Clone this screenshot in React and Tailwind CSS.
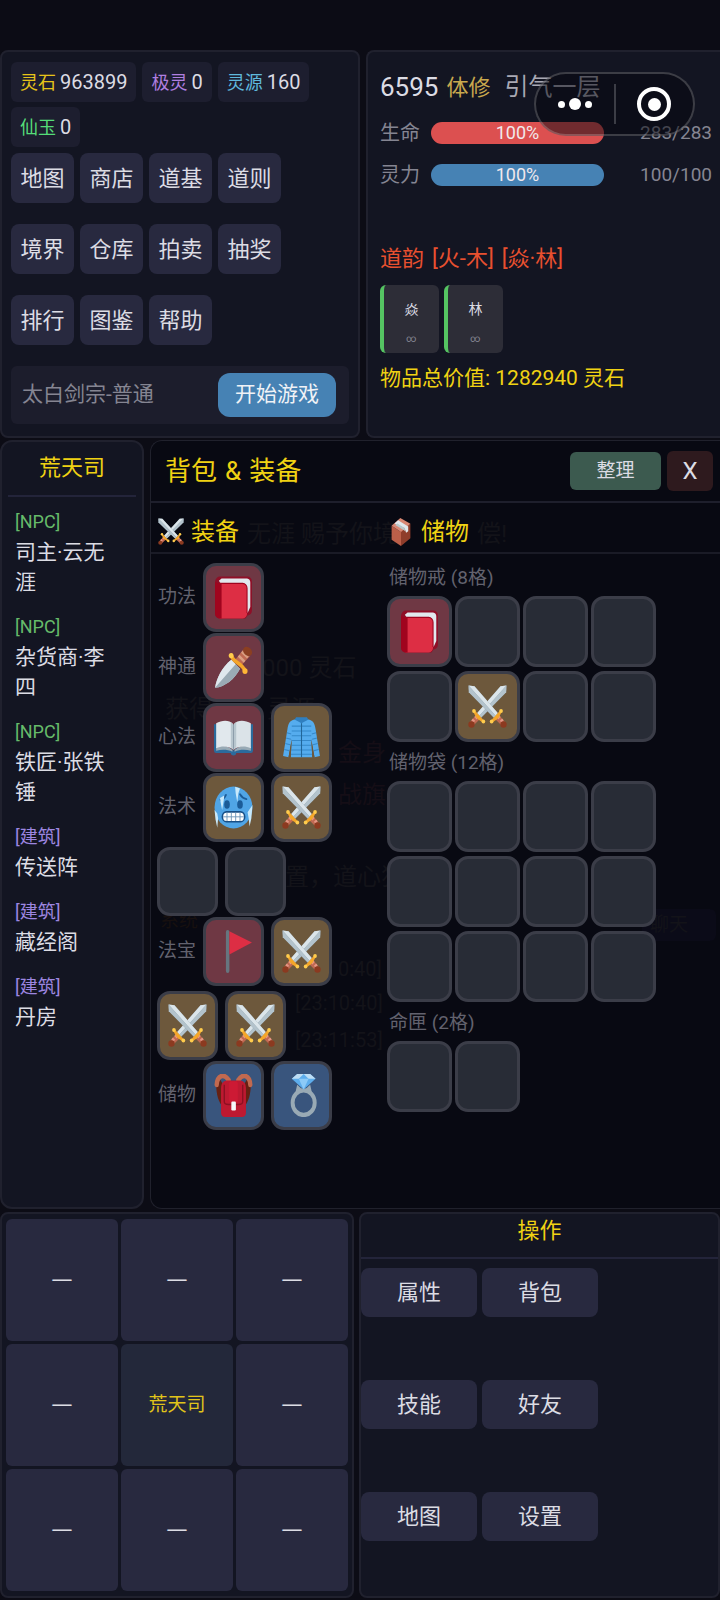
import React, { useState } from 'react'

const CURRENCIES = [
  { label: '灵石', value: 963899, color: 'text-[#e6c419]' },
  { label: '极灵', value: 0, color: 'text-[#b07fe0]' },
  { label: '灵源', value: 160, color: 'text-[#5fb8dc]' },
  { label: '仙玉', value: 0, color: 'text-[#55dc78]' },
]

const MENU = ['地图', '商店', '道基', '道则', '境界', '仓库', '拍卖', '抽奖', '排行', '图鉴', '帮助']

const PLACES = [
  { type: 'NPC', name: '司主·云无涯' },
  { type: 'NPC', name: '杂货商·李四' },
  { type: 'NPC', name: '铁匠·张铁锤' },
  { type: '建筑', name: '传送阵' },
  { type: '建筑', name: '藏经阁' },
  { type: '建筑', name: '丹房' },
]

const EQUIPMENT = [
  { label: '功法', slots: [{ icon: 'book', tone: 'red' }] },
  { label: '神通', slots: [{ icon: 'dagger', tone: 'red' }] },
  { label: '心法', slots: [{ icon: 'openBook', tone: 'red' }, { icon: 'coat', tone: 'gold' }] },
  { label: '法术', slots: [{ icon: 'coldFace', tone: 'gold' }, { icon: 'swords', tone: 'gold' }, {}, {}] },
  {
    label: '法宝',
    slots: [
      { icon: 'flag', tone: 'red' },
      { icon: 'swords', tone: 'gold' },
      { icon: 'swords', tone: 'gold' },
      { icon: 'swords', tone: 'gold' },
    ],
  },
  { label: '储物', slots: [{ icon: 'backpack', tone: 'blue' }, { icon: 'ring', tone: 'blue' }] },
]

const STORAGE = [
  { label: '储物戒', size: 8, items: { 0: { icon: 'book', tone: 'red' }, 5: { icon: 'swords', tone: 'gold' } } },
  { label: '储物袋', size: 12, items: {} },
  { label: '命匣', size: 2, items: {} },
]

const ACTIONS = ['属性', '背包', '技能', '好友', '地图', '设置']

const TONES = {
  empty: 'bg-[#282c36]',
  red: 'bg-[#6f3844]',
  gold: 'bg-[#6d583c]',
  blue: 'bg-[#39557d]',
}

export default function App() {
  const [bagOpen, setBagOpen] = useState(true)

  return (
    <div className="relative flex min-h-screen flex-col bg-[#0c0c15] pt-[50px] font-[Roboto,'Noto_Sans_CJK_SC',sans-serif] text-[#dcdce4]">
      <div className="grid grid-cols-[60fr_59fr] gap-1.5">
        <MenuPanel />
        <StatusPanel />
      </div>
      <div className="mt-0.5 grid flex-1 grid-cols-[144px_1fr] gap-1.5">
        <PlacesPanel />
        <section className="relative overflow-hidden rounded-l-xl border border-r-0 border-[#20212c] bg-[#080912]">
          <MessageLog />
          {bagOpen && <Bag onClose={() => setBagOpen(false)} />}
        </section>
      </div>
      <div className="mt-[3px] mb-0.5 grid grid-cols-[354fr_361fr] gap-[5px]">
        <MiniMap />
        <ActionPanel />
      </div>
      <Capsule />
    </div>
  )
}

function MenuPanel() {
  return (
    <section className="rounded-lg border-2 border-[#20212e] bg-[#131522] px-[9px] pt-2.5 pb-3">
      <div className="flex flex-wrap gap-x-1.5 gap-y-[5px]">
        {CURRENCIES.map((c) => (
          <span key={c.label} className="flex h-10 items-center gap-1 rounded-md bg-[#1d1e2f] px-[9px]">
            <span className={`text-[18px] ${c.color}`}>{c.label}</span>
            <span className="text-[20px]">{c.value}</span>
          </span>
        ))}
      </div>
      <div className="mt-1.5 flex flex-wrap gap-x-1.5 gap-y-[21px] pr-12">
        {MENU.map((name) => (
          <button key={name} className="h-[50px] w-[63px] rounded-lg bg-[#28293f] text-[22px]">{name}</button>
        ))}
      </div>
      <div className="mt-[21px] flex h-[58px] items-center justify-between rounded-md bg-[#1c1d2c] pr-[13px] pl-[11px]">
        <span className="text-[21px] text-[#858592]">太白剑宗-普通</span>
        <button className="h-11 rounded-xl bg-[#4682b4] px-[17px] text-[21px] text-[#f0f2f6]">开始游戏</button>
      </div>
    </section>
  )
}

function StatusPanel() {
  return (
    <section className="rounded-l-lg border-2 border-r-0 border-[#20212e] bg-[#131522] pt-2.5 pr-2 pl-3">
      <div className="flex h-[50px] items-center">
        <span className="text-[26px]">6595</span>
        <span className="ml-2 text-[22px] text-[#c9a94e]">体修</span>
        <span className="ml-3.5 text-[24px] text-[#a9a9b4]">引气一层</span>
      </div>
      <Meter label="生命" value={283} max={283} color="bg-[#dc5050]" />
      <Meter label="灵力" value={100} max={100} color="bg-[#4682b4]" />
      <p className="mt-12 flex gap-2 text-[22px] leading-[30px] text-[#e8502f]">
        <span>道韵</span>
        <span>[火-木]</span>
        <span>[焱·林]</span>
      </p>
      <div className="mt-[11px] flex gap-[5px]">
        <Charm name="焱" />
        <Charm name="林" />
      </div>
      <p className="mt-2.5 text-[21px] leading-[30px] text-[#f0d213]">物品总价值: 1282940 灵石</p>
    </section>
  )
}

function Meter({ label, value, max, color }) {
  return (
    <div className="flex h-[42px] items-center">
      <span className="w-[51px] text-[20px] text-[#858592]">{label}</span>
      <div className="relative h-[22px] w-[173px] overflow-hidden rounded-full bg-[#28293f]">
        <div className={`h-full ${color}`} style={{ width: `${(value / max) * 100}%` }} />
        <span className="absolute inset-0 text-center text-[18px] leading-[22px] text-[#f0e8ec]">{Math.round((value / max) * 100)}%</span>
      </div>
      <span className="ml-auto text-[19px] text-[#858592]">{value}/{max}</span>
    </div>
  )
}

function Charm({ name }) {
  return (
    <div className="flex h-[68px] w-[59px] flex-col items-center rounded-md border-l-4 border-[#55c462] bg-[#2d2d37] pt-2.5">
      <span className="text-[14px] leading-7">{name}</span>
      <span className="mt-1.5 text-[10px] leading-5 text-[#858592]">∞</span>
    </div>
  )
}

function PlacesPanel() {
  return (
    <section className="rounded-xl border-2 border-[#20212e] bg-[#131522] px-1.5">
      <h2 className="border-b-2 border-[#23243a] pt-2.5 pb-[11px] text-center text-[22px] leading-8 text-[#f0d213]">荒天司</h2>
      <ul className="flex flex-col gap-[15px] pt-2.5 pr-3.5 pl-[7px]">
        {PLACES.map((p) => (
          <li key={p.name}>
            <span className={`block text-[18px] leading-[30px] ${p.type === 'NPC' ? 'text-[#66bb6a]' : 'text-[#9d86e0]'}`}>[{p.type}]</span>
            <a href="#" className="block text-[21px] leading-[30px]">{p.name}</a>
          </li>
        ))}
      </ul>
    </section>
  )
}

// Old messages, barely visible behind the bag window
function MessageLog() {
  return (
    <div aria-hidden="true" className="absolute inset-0 text-[24px] leading-8 whitespace-nowrap text-[#131319]">
      <span className="absolute top-[77px] left-[96px]">无涯 赐予你境</span>
      <span className="absolute top-[77px] left-[326px]">偿!</span>
      <span className="absolute top-[211px] left-[111px]">000 灵石</span>
      <span className="absolute top-[252px] left-[14px]">获得</span>
      <span className="absolute top-[252px] left-[116px]">灵源</span>
      <span className="absolute top-[296px] left-[187px] text-[#150e16]">金身</span>
      <span className="absolute top-[338px] left-[187px] text-[#150e16]">战旗 [</span>
      <span className="absolute top-[420px] left-[134px]">置，道心犹</span>
      <span className="absolute top-[468px] left-[9px] text-[19px] leading-6 text-[#17100f]">系统</span>
      <span className="absolute top-[512px] left-[187px] text-[20px]">0:40]</span>
      <span className="absolute top-[546px] left-[144px] text-[20px]">[23:10:40]</span>
      <span className="absolute top-[583px] left-[144px] text-[20px]">[23:11:53]</span>
      <span className="absolute top-[468px] right-1 rounded-md bg-[#0b0b18] pr-7 pl-2 text-[19px]">聊天</span>
    </div>
  )
}

function Bag({ onClose }) {
  return (
    <div className="relative">
      <div className="flex h-[62px] items-center border-b-2 border-[#1e1f2c] pr-[7px] pl-3.5">
        <h1 className="mr-auto flex gap-2 text-[26px] text-[#f0d213]">
          <span>背包</span>
          <span>&</span>
          <span>装备</span>
        </h1>
        <button className="h-[38px] w-[91px] rounded-md bg-[#3c5a4f] text-[19px]">整理</button>
        <button onClick={onClose} aria-label="关闭" className="ml-1.5 h-10 w-[46px] rounded-md bg-[#2e1a1e] text-[24px]">X</button>
      </div>
      <div className="grid h-[51px] grid-cols-[230px_1fr] items-center border-b-2 border-[#1a1b26] pt-2 pl-[7px] text-[24px] text-[#f0d213]">
        <h2 className="flex items-center gap-[7px]"><Glyph name="swords" className="h-[27px] w-[26px]" />装备</h2>
        <h2 className="flex items-center gap-[7px]"><Glyph name="box" className="h-[28px] w-[26px]" />储物</h2>
      </div>
      <div className="grid grid-cols-[230px_1fr] pl-1.5">
        <div className="flex flex-col gap-px pt-[9px]">
          {EQUIPMENT.map((row) => (
            <div key={row.label} className="flex flex-wrap items-center gap-x-[7px] gap-y-[5px] pr-6">
              <span className="pl-px text-[19px] text-[#62626e]">{row.label}</span>
              {row.slots.map((slot, i) => (
                <Slot key={i} {...slot} className="h-[69px] w-[61px]" />
              ))}
            </div>
          ))}
        </div>
        <div className="pt-[3px]">
          {STORAGE.map((bag) => (
            <div key={bag.label}>
              <h3 className="pt-[3px] pl-0.5 text-[19px] leading-9 text-[#62626e]">{bag.label} ({bag.size}格)</h3>
              <div className="grid w-fit grid-cols-4 gap-x-[3px] gap-y-1">
                {Array.from({ length: bag.size }, (_, i) => (
                  <Slot key={i} {...bag.items[i]} className="h-[71px] w-[65px]" />
                ))}
              </div>
            </div>
          ))}
        </div>
      </div>
    </div>
  )
}

function Slot({ icon, tone = 'empty', className }) {
  return (
    <button aria-label={icon || 'empty'} className={`flex items-center justify-center rounded-[13px] border-3 border-[#3b3d48] ${TONES[tone]} ${className}`}>
      {icon && <Glyph name={icon} className="h-[43px] w-[39px]" />}
    </button>
  )
}

function MiniMap() {
  return (
    <section className="grid grid-cols-3 gap-[3px] rounded-lg border-2 border-[#20212e] bg-[#131522] px-1 py-[5px]">
      {Array.from({ length: 9 }, (_, i) => (
        i === 4
          ? <button key={i} className="h-[122px] rounded-md bg-[#23283a] text-[19px] text-[#e0c41a]">荒天司</button>
          : <button key={i} className="h-[122px] rounded-md bg-[#28293f] pb-1.5 font-['Noto_Sans_CJK_SC',sans-serif] text-[24px]">—</button>
      ))}
    </section>
  )
}

function ActionPanel() {
  return (
    <section className="rounded-lg border-2 border-[#20212e] bg-[#131522]">
      <h2 className="border-b-2 border-[#23243a] pt-px pb-2.5 text-center text-[22px] leading-8 text-[#f0d213]">操作</h2>
      <div className="mt-[9px] grid w-fit grid-cols-2 gap-x-[5px] gap-y-[63px]">
        {ACTIONS.map((name) => (
          <button key={name} className="h-[49px] w-[116px] rounded-lg bg-[#28293f] text-[22px]">{name}</button>
        ))}
      </div>
    </section>
  )
}

// Mini-program controls that float over the page
function Capsule() {
  return (
    <div className="absolute top-[72px] right-[25px] flex h-16 w-[161px] items-center rounded-full border-2 border-white/20 bg-[#06060d]/50">
      <button aria-label="更多" className="flex flex-1 items-center justify-center gap-1">
        <span className="size-[7px] rounded-full bg-white" />
        <span className="size-3 rounded-full bg-white" />
        <span className="size-[7px] rounded-full bg-white" />
      </button>
      <span className="h-10 w-0.5 bg-white/20" />
      <button aria-label="退出" className="flex flex-1 items-center justify-center">
        <span className="flex size-[34px] items-center justify-center rounded-full border-4 border-white">
          <span className="size-[13px] rounded-full bg-white" />
        </span>
      </button>
    </div>
  )
}

function Glyph({ name, className }) {
  return (
    <svg viewBox="0 0 36 36" preserveAspectRatio="none" aria-hidden="true" className={className}>
      {GLYPHS[name]}
    </svg>
  )
}

const sword = (
  <>
    <path fill="#8a9ba6" d="M.5.5 6 1 28 24 24.500 28 .8 6z" />
    <path fill="#dbe5ea" d="M.5.5 6 1 27.500 23.500 25.500 25.700z" />
    <path fill="#b3c3cc" d="M.5.5 25.500 25.700 24 27.500 .8 6z" />
    <path fill="#bf6952" d="m25 28.500 3.500-3.500 5.500 6-3 3z" />
    <path fill="#e59684" d="m26.500 27 2-2 1.600 1.800-2 2zM29.500 30l2-2 1.400 1.600-2 2z" />
    <path fill="#f4a62a" d="M21.500 29.500 29.500 21.500 31 22.800 28.500 27 26.500 28.800 23 31z" />
    <circle cx="21.800" cy="30.500" r="1.700" fill="#ffcc4d" />
    <circle cx="30.500" cy="21.800" r="1.700" fill="#ffcc4d" />
    <ellipse cx="32.800" cy="33" rx="2.900" ry="2.700" fill="#8b3a20" />
  </>
)

const GLYPHS = {
  swords: (
    <>
      <g transform="matrix(-1 0 0 1 36 0)">{sword}</g>
      {sword}
    </>
  ),
  book: (
    <>
      <path fill="#8f0f27" d="M6 .5h25a4 4 0 0 1 4 4V29a4 4 0 0 1-4 4l-2 2.500H5a4 4 0 0 1-4-4V5a4.500 4.500 0 0 1 5-4.500z" />
      <path fill="#e1e8ed" d="M7 2h23.500A3.500 3.500 0 0 1 33.500 5.500V26l-2.500 5L6 6 4.500 4z" />
      <path fill="#dd2e44" d="M5 6.200h21.500a4 4 0 0 1 4 4V31a4 4 0 0 1-4 4.500H5z" />
      <path fill="#a0041e" d="M1 4c.5 2 2 2.200 6 2.200v29.300H5a4 4 0 0 1-4-4z" />
      <path fill="none" stroke="#a0041e" strokeWidth="1" d="M5 6.200h21.500a4 4 0 0 1 4 4V31" />
    </>
  ),
  dagger: (
    <>
      <path fill="#c5d0d7" d="M1 35C2 28 7 18 16 11.500l8 7.500C19 28 10 34 1 35z" />
      <path fill="#dfe8ed" d="M1 35C2 28 7 18 16 11.500l4 3.800z" />
      <path fill="#9aaab4" d="m1 35 19-19.700 4 3.700C19 28 10 34 1 35z" />
      <path fill="#bf6952" d="m20 11 7-8 6 5.500-7.500 7.500z" />
      <path fill="#d99e82" d="m22 9 1.500-1.600 5.500 5-1.500 1.600zM25 5.600l1.400-1.600 5.500 5-1.400 1.500z" />
      <path fill="none" stroke="#f4a62a" strokeWidth="3.200" strokeLinecap="round" d="M16 8c.5 2 2.500 4 5 5.500s6 3.500 7.500 7" />
      <circle cx="15.800" cy="8" r="2.200" fill="#ffcc4d" />
      <circle cx="28.600" cy="21" r="2.400" fill="#ffb636" />
      <ellipse cx="31" cy="4.500" rx="4.500" ry="3.500" fill="#8b3f22" transform="rotate(40 31 4.500)" />
    </>
  ),
  openBook: (
    <>
      <path fill="#2b6b9c" d="M0 7h3v20h12l3 2 3-2h12V7h3v22a2 2 0 0 1-2 2H20.500a2.500 2 0 0 1-5 0H2a2 2 0 0 1-2-2z" />
      <path fill="#99aab5" d="M2 26C7 24 13 25 17 28.500V30C13 28 7 28 2 29zM34 26c-5-2-11-1-15 2.500V30c4-2 10-2 15-1z" />
      <path fill="#e1e8ed" d="M2 6c5-2.500 12-3 15.500.5V28C13 25 7 25 2 27z" />
      <path fill="#dbe3e8" d="M34 6C29 3.500 22 3 18.500 6.500V28C23 25 29 25 34 27z" />
      <path fill="#b8c6ce" d="M15.500 5 18 7.500 20.500 5v21L18 28.500 15.500 26z" />
      <path stroke="#8899a6" strokeWidth=".8" d="M18 7v21" />
    </>
  ),
  coat: (
    <>
      <path fill="#2f7fc0" d="M13 1h10l2 3-7 3-7-3z" />
      <path fill="#55acee" d="M11.500 3 15 4.500 18 6l3-1.500L24.500 3c4.500 1 5.500 3 6.500 8l4 22.500-5 1L27 19l1 15.500H8L9 19 6 34.500l-5-1L5 11c1-5 2-7 6.500-8z" />
      <path fill="none" stroke="#3588c9" strokeWidth=".9" d="M9 8.500h18M9 12.500h18M9 16.500h18M9 20.500h18M8.500 24.500h19M8.500 28.500h19M8 32h20M4.500 14l4 1M3.700 18.500l4.500 1M3 23l4.500 1M2 28l4.500 1M31.500 14l-4 1M32.300 18.500l-4.500 1M33 23l-4.500 1M34 28l-4.500 1" />
      <path stroke="#226699" strokeWidth="1" d="M18 6v28.500" />
      <path fill="#6d583c" d="M8.900 20 8.100 34.500H6zM27.100 20l.8 14.500H30z" />
    </>
  ),
  coldFace: (
    <>
      <circle cx="18" cy="18" r="17.500" fill="#50a5e6" />
      <ellipse cx="12" cy="15.500" rx="2.600" ry="3.600" fill="#1b5b97" />
      <ellipse cx="24" cy="15.500" rx="2.600" ry="3.600" fill="#1b5b97" />
      <path fill="none" stroke="#1b5b97" strokeWidth="1.600" strokeLinecap="round" d="M6 11.500c2.500-.5 4-2 5-4M24 7c1.500 2.500 3.500 3.500 6 4" />
      <rect x="7" y="21" width="22" height="9.500" rx="4.500" fill="#174f86" />
      <rect x="8.500" y="22.300" width="19" height="7" rx="3" fill="#fff" />
      <path stroke="#6c94b8" strokeWidth=".8" d="M8.500 25.800h19M12 22.300v7M16 22.300v7M20 22.300v7M24 22.300v7" />
      <path fill="#c8e9fb" d="M19.500.7 24 2l-1.500 4-1 7.500-1.500-7.500zM5.500 10l4-2-.5 4-1.500 8-1.300-6zM.5 20l2.500 3 .8 4-.8 8-1.600-7zM35.500 16l-4.500 6 1 5 .8 7 1.700-7z" />
    </>
  ),
  flag: (
    <>
      <rect x="11" y="0" width="3.200" height="36" rx="1.600" fill="#66757f" />
      <path fill="#dd2e44" d="M14.200 1 35 10.500 14.200 20.500z" />
    </>
  ),
  backpack: (
    <>
      <path fill="#662113" d="M2 8c0 9 2 16 7 20V10L6 5zM34 8c0 9-2 16-7 20V10l3-5z" />
      <path fill="none" stroke="#c1694f" strokeWidth="4" strokeLinecap="round" d="M2.500 9C3 1.500 9-1 13.500 5M33.500 9C33 1.500 27-1 22.500 5" />
      <path fill="#be1931" d="M12 5.500h12c4 0 5.500 3 5.500 7V32c0 3-1.500 4-4.500 4H11c-3 0-4.500-1-4.500-4V12.500c0-4 1.500-7 5.500-7z" />
      <path fill="none" stroke="#8c1022" strokeWidth="1.300" d="M9.500 9v14c0 2 1 2.500 4 2.500h9c3 0 4-.5 4-2.500V9" />
      <rect x="14" y="6" width="8" height="18" rx="2" fill="#cd1a34" />
      <rect x="16" y="23" width="4.200" height="7.500" rx="1" fill="#f5f8fa" />
    </>
  ),
  ring: (
    <>
      <ellipse cx="20" cy="24" rx="10.200" ry="10.300" fill="none" stroke="#99aab5" strokeWidth="3.600" />
      <path fill="#99aab5" d="m14 9 6 5 6-5 1.500 6h-15z" />
      <path fill="#5dadec" d="M14 0h12l5 4-11 9L9 4z" />
      <path fill="#bdddf4" d="M14 0h6l-4.500 4H9zM20 0h6l5 4h-6.500z" />
      <path fill="#8ccaf7" d="M15.500 4h9L20 13z" />
    </>
  ),
  box: (
    <>
      <path fill="#8f3d2b" d="M17 17 31 7.500V26L18 36z" />
      <path fill="#bc5f49" d="M5 10 18 18v18L5 28z" />
      <path fill="#d98773" d="M5 10 17 0l14 7.500L18 18z" />
      <path fill="#e1e8ed" d="m9 7 5-4 14 8v6l-3 2-2-6z" />
      <path fill="#b9c8cb" d="m10 9 3-2 10 6 1 4-3-2z" />
    </>
  ),
}
